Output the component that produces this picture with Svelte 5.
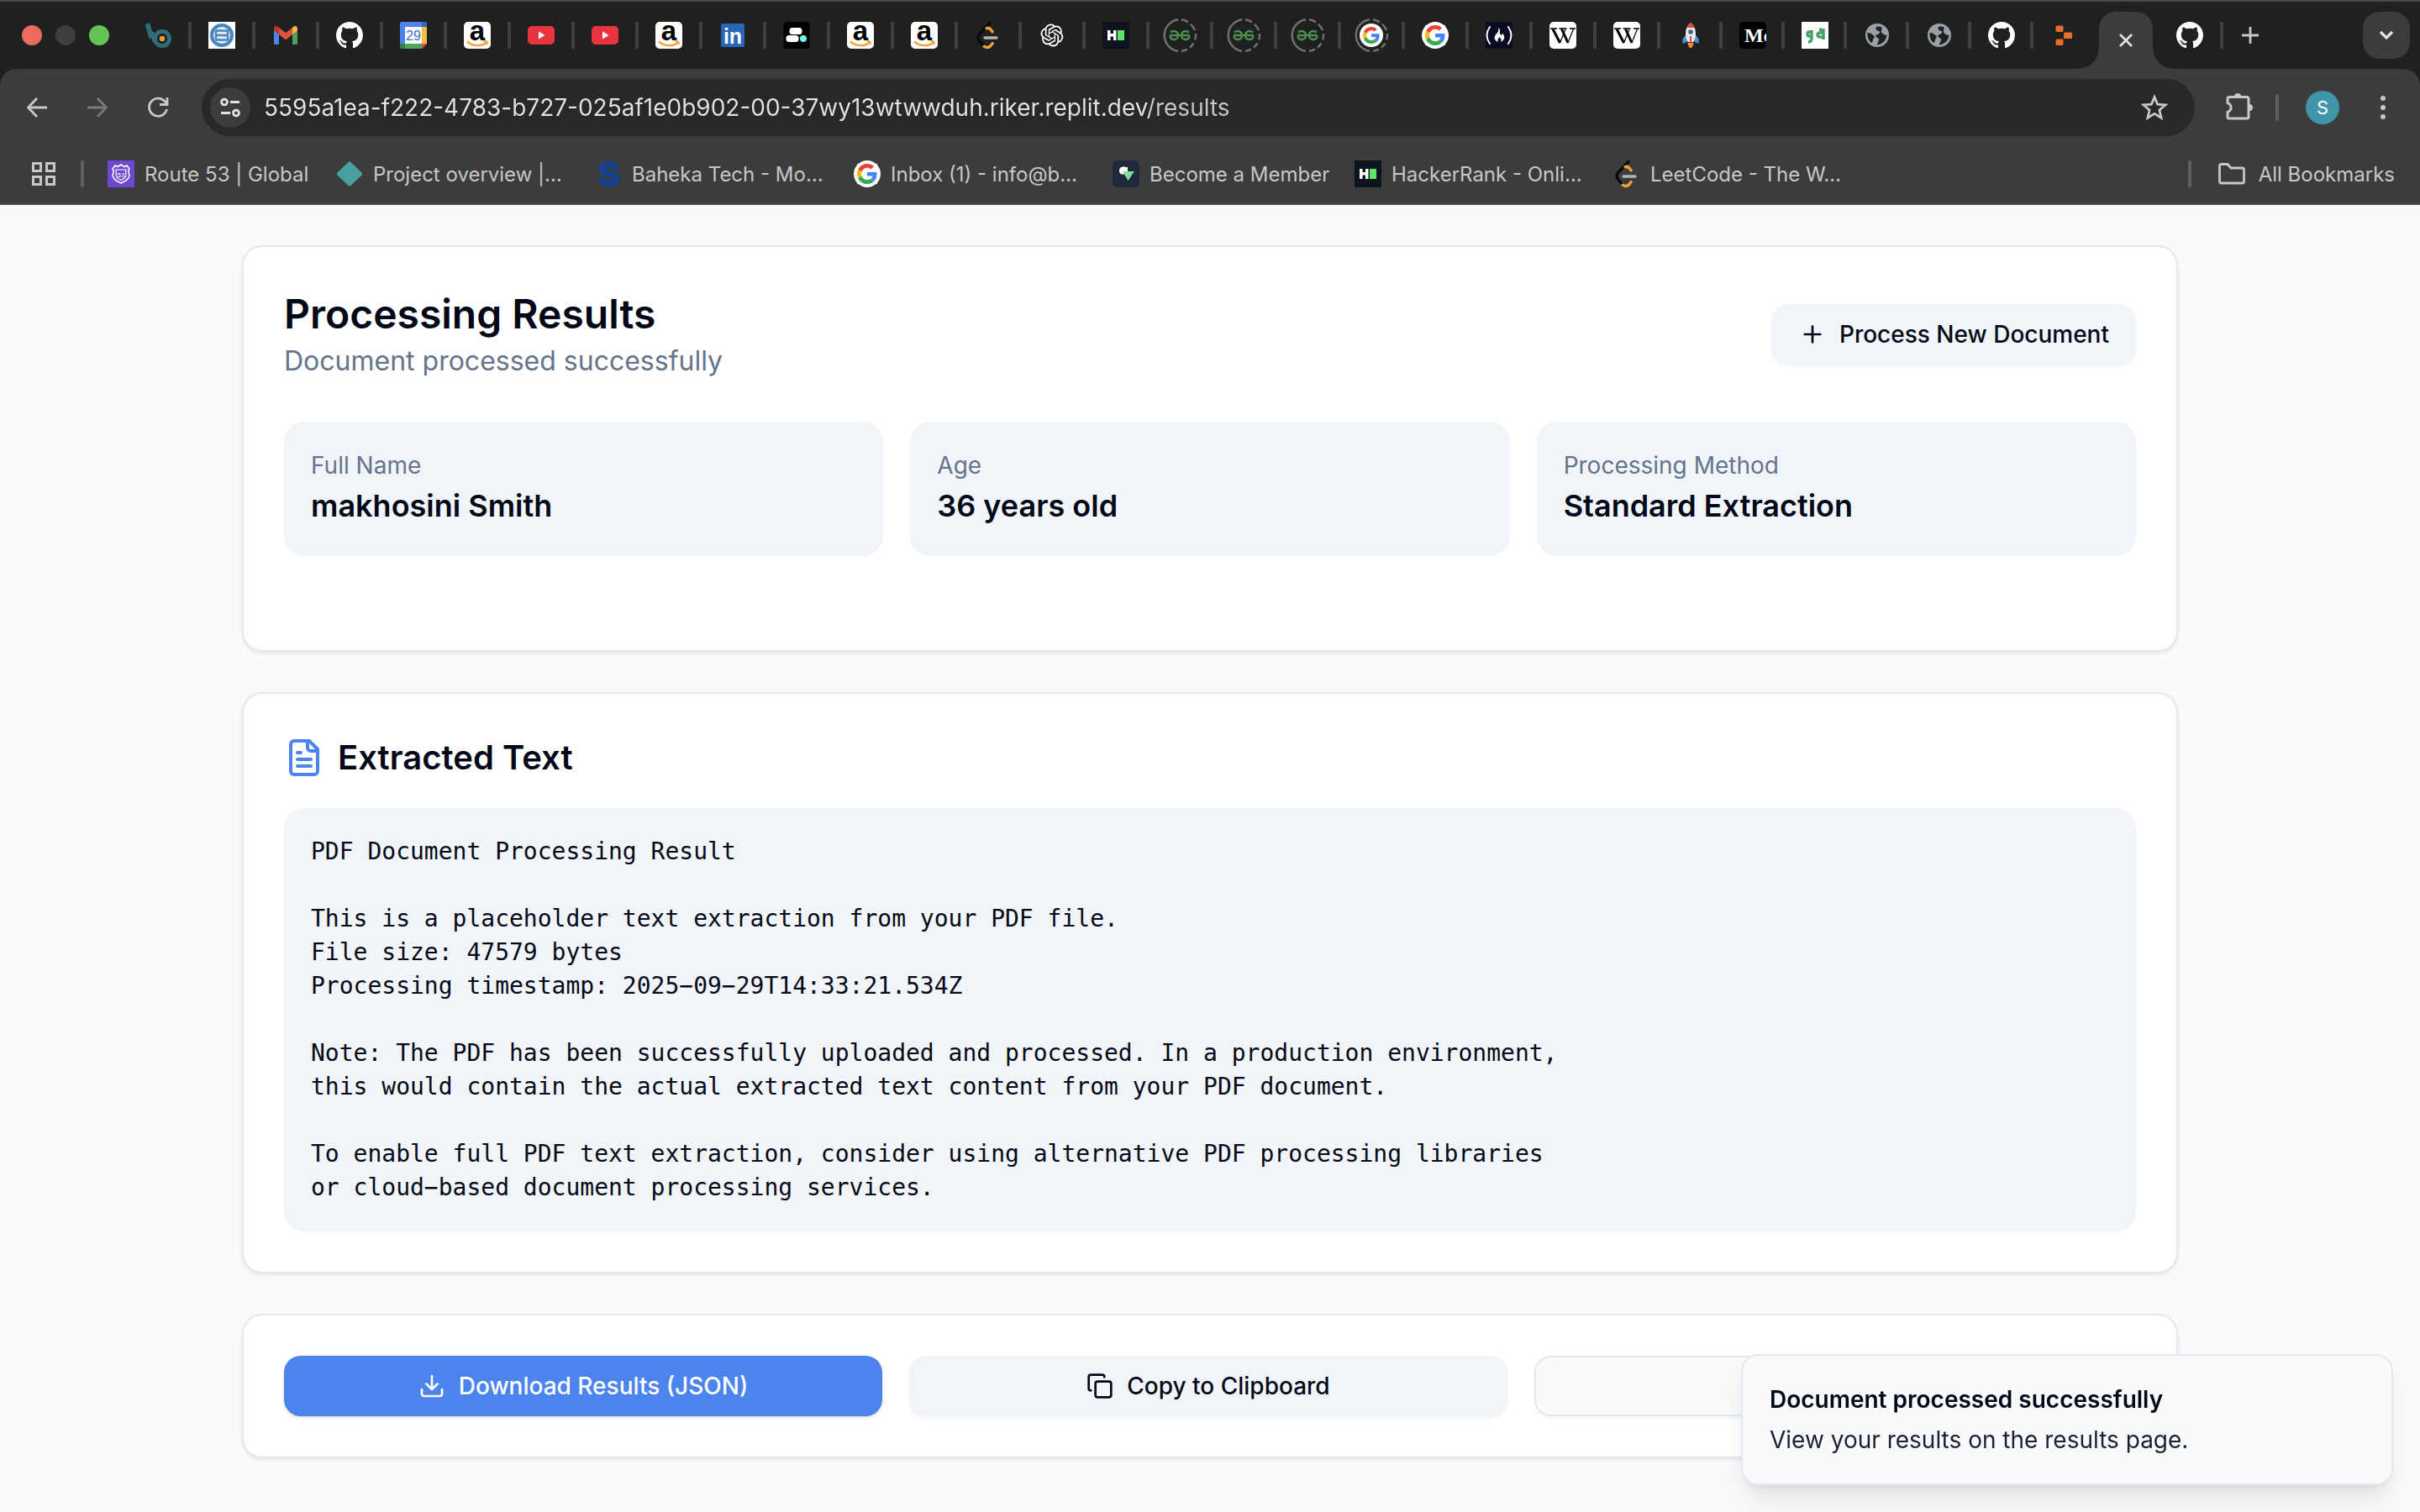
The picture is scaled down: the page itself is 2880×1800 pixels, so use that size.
<script>
  const tabs = [
    'bluehost', 'edge', 'gmail', 'github', 'calendar', 'amazon', 'youtube', 'youtube',
    'amazon', 'linkedin', 'blobs', 'amazon', 'amazon', 'leetcode', 'openai', 'hackerrank',
    'geeks', 'geeks', 'geeks', 'googleRing', 'google', 'freecodecamp', 'wikipedia', 'wikipedia',
    'rocket', 'medium', 'quote', 'globe', 'globe', 'github', 'replit'
  ];

  const bookmarks = [
    { icon: 'route53', label: 'Route 53 | Global', size: 'w-route' },
    { icon: 'diamond', label: 'Project overview |…', size: '' },
    { icon: 'letterS', label: 'Baheka Tech - Mo…', size: '' },
    { icon: 'google', label: 'Inbox (1) - info@b…', size: '' },
    { icon: 'member', label: 'Become a Member', size: 'w-member' },
    { icon: 'hackerrank', label: 'HackerRank - Onli…', size: '' },
    { icon: 'leetcode', label: 'LeetCode - The W…', size: '' }
  ];

  const stats = [
    { label: 'Full Name', value: 'makhosini Smith' },
    { label: 'Age', value: '36 years old' },
    { label: 'Processing Method', value: 'Standard Extraction' }
  ];

  const extracted = `PDF Document Processing Result

This is a placeholder text extraction from your PDF file.
File size: 47579 bytes
Processing timestamp: 2025−09−29T14:33:21.534Z

Note: The PDF has been successfully uploaded and processed. In a production environment,
this would contain the actual extracted text content from your PDF document.

To enable full PDF text extraction, consider using alternative PDF processing libraries
or cloud−based document processing services.`;

  let url = $state('5595a1ea-f222-4783-b727-025af1e0b902-00-37wy13wtwwduh.riker.replit.dev/results');
</script>

{#snippet googleMark()}
  <circle cx="24" cy="24" r="34" fill="#fff" />
  <path fill="#EA4335" d="M24 9.5c3.54 0 6.71 1.22 9.21 3.6l6.85-6.85C35.9 2.38 30.47 0 24 0 14.62 0 6.51 5.38 2.56 13.22l7.98 6.19C12.43 13.72 17.74 9.5 24 9.5z" />
  <path fill="#4285F4" d="M46.98 24.55c0-1.57-.15-3.09-.38-4.55H24v9.02h12.94c-.58 2.96-2.26 5.48-4.78 7.18l7.73 6c4.51-4.18 7.09-10.36 7.09-17.65z" />
  <path fill="#FBBC05" d="M10.53 28.59c-.48-1.45-.76-2.99-.76-4.59s.27-3.14.76-4.59l-7.98-6.19C.92 16.46 0 20.12 0 24c0 3.88.92 7.54 2.56 10.78l7.97-6.19z" />
  <path fill="#34A853" d="M24 48c6.48 0 11.93-2.13 15.89-5.81l-7.73-6c-2.15 1.45-4.92 2.3-8.16 2.3-6.26 0-11.57-4.22-13.47-9.91l-7.98 6.19C6.51 42.62 14.62 48 24 48z" />
{/snippet}

{#snippet ring()}
  <g fill="none" stroke="#707272" stroke-width="2.4">
    <path d="M14 -2.8A19 19 0 0 0 14 34.8" />
    <path d="M18 -2.8A19 19 0 0 1 26 0.4M29 2.8A19 19 0 0 1 34 10M35 14A19 19 0 0 1 34.2 21.5M32.5 25.5A19 19 0 0 1 28 30.5M25 32.6A19 19 0 0 1 18 34.8" />
  </g>
{/snippet}

{#snippet favicon(name)}
  <svg class="favicon" viewBox="0 0 32 32" aria-hidden="true">
    {#if name === 'bluehost'}
      <path d="M0.5 3.5 6 1l4.500 15-4.500 5z" fill="#2f6d7a" />
      <circle cx="21" cy="20" r="8.500" fill="none" stroke="#2f6d7a" stroke-width="5" />
      <path d="M6 8c.5 7 2 14 6 19l4-10z" fill="#2f6d7a" />
      <circle cx="21" cy="20" r="6" fill="#1f2120" />
      <circle cx="21" cy="20" r="3.200" fill="#f29a38" />
    {:else if name === 'edge'}
      <rect width="32" height="32" fill="#fff" />
      <circle cx="16" cy="16" r="12" fill="#e3edf6" stroke="#4a86bd" stroke-width="4" />
      <path d="M9 10.500h14v11H9M9 16h14M9 10.500v11" fill="none" stroke="#4a86bd" stroke-width="2.500" />
    {:else if name === 'gmail'}
      <path d="M2 8v17.500A1.500 1.500 0 0 0 3.500 27H8V14z" fill="#4c87ee" />
      <path d="M30 8v17.500a1.500 1.500 0 0 1-1.500 1.500H24V14z" fill="#4ea35c" />
      <path d="M24 7v8l6-4.500V8a3 3 0 0 0-4.800-2.400z" fill="#f3b93f" />
      <path d="M8 7v8l-6-4.500V8a3 3 0 0 1 4.800-2.400z" fill="#b6382c" />
      <path d="M8 7l8 6 8-6v8l-8 6.500L8 15z" fill="#dc5142" />
    {:else if name === 'github'}
      <path transform="scale(2)" fill="#fff" d="M8 0C3.58 0 0 3.58 0 8c0 3.54 2.29 6.53 5.47 7.59.4.07.55-.17.55-.38 0-.19-.01-.82-.01-1.49-2.01.37-2.53-.49-2.69-.94-.09-.23-.48-.94-.82-1.13-.28-.15-.68-.52-.01-.53.63-.01 1.08.58 1.23.82.72 1.21 1.87.87 2.33.66.07-.52.28-.87.51-1.07-1.78-.2-3.64-.89-3.64-3.95 0-.87.31-1.59.82-2.15-.08-.2-.36-1.02.08-2.12 0 0 .67-.21 2.2.82.64-.18 1.32-.27 2-.27s1.36.09 2 .27c1.53-1.04 2.2-.82 2.2-.82.44 1.1.16 1.92.08 2.12.51.56.82 1.27.82 2.15 0 3.07-1.87 3.75-3.65 3.95.29.25.54.73.54 1.48 0 1.07-.01 1.93-.01 2.2 0 .21.15.46.55.38A8.01 8.01 0 0 0 16 8c0-4.42-3.58-8-8-8z" />
    {:else if name === 'calendar'}
      <path d="M0 2a2 2 0 0 1 2-2h28a2 2 0 0 1 2 2v24l-6 6H2a2 2 0 0 1-2-2z" fill="#4a83ee" />
      <path d="M26 6h6v20h-6z" fill="#f4bc42" />
      <path d="M26 0h4a2 2 0 0 1 2 2v4h-6z" fill="#2f64c4" />
      <path d="M6 26h20v6H6z" fill="#53a45e" />
      <path d="M0 26h6v6H2a2 2 0 0 1-2-2z" fill="#38803f" />
      <path d="M26 26h6l-6 6z" fill="#dc5142" />
      <rect x="6" y="6" width="20" height="20" fill="#fff" />
      <text x="16" y="21.500" text-anchor="middle" class="sans" font-size="16" fill="#3a6fd0">29</text>
    {:else if name === 'amazon'}
      <rect width="32" height="32" rx="5" fill="#fff" />
      <text x="16" y="22" text-anchor="middle" class="sans bold" font-size="33" fill="#000">a</text>
      <path d="M4 23.500c7 6 17 6 23 1" fill="none" stroke="#f2a43a" stroke-width="2.400" />
      <path d="M23.500 23.300c3-.8 5.500-.6 4 4" fill="none" stroke="#f2a43a" stroke-width="1.800" />
    {:else if name === 'youtube'}
      <rect y="5" width="32" height="22" rx="5" fill="#ea3340" />
      <path d="M13 11.500v9l7.500-4.500z" fill="#fff" />
    {:else if name === 'linkedin'}
      <rect x="2" y="2" width="28" height="28" rx="2" fill="#2867b8" />
      <text x="16" y="26" text-anchor="middle" class="sans bold" font-size="25" fill="#fff">in</text>
    {:else if name === 'blobs'}
      <rect x="0.5" width="31" height="32" rx="4" fill="#000" />
      <rect x="7.500" y="7" width="15" height="8" rx="3.500" fill="#fff" />
      <rect x="3.500" y="16" width="15" height="8" rx="3.500" fill="#fff" />
      <circle cx="24" cy="20" r="4" fill="#6ff5f0" />
    {:else if name === 'leetcode'}
      <path d="M18 1.500 6 14q-4 4.500 0 9l5 6" fill="none" stroke="#0a0a0a" stroke-width="3.400" stroke-linecap="round" />
      <path d="M13 8.500q3-2.500 6 .5l3 4M10 28.500q5 4 9 0l3-4" fill="none" stroke="#eda23b" stroke-width="3.400" />
      <path d="M12 19h14" stroke="#b4b3b3" stroke-width="3.400" stroke-linecap="round" />
    {:else if name === 'openai'}
      <path transform="translate(2.500 2.500) scale(1.120)" fill="#fff" d="M22.2819 9.8211a5.9847 5.9847 0 0 0-.5157-4.9108 6.0462 6.0462 0 0 0-6.5098-2.9A6.0651 6.0651 0 0 0 4.9807 4.1818a5.9847 5.9847 0 0 0-3.9977 2.9 6.0462 6.0462 0 0 0 .7427 7.0966 5.98 5.98 0 0 0 .511 4.9107 6.051 6.051 0 0 0 6.5146 2.9001A5.9847 5.9847 0 0 0 13.2599 24a6.0557 6.0557 0 0 0 5.7718-4.2058 5.9894 5.9894 0 0 0 3.9977-2.9001 6.0557 6.0557 0 0 0-.7475-7.0729zm-9.022 12.6081a4.4755 4.4755 0 0 1-2.8764-1.0408l.1419-.0804 4.7783-2.7582a.7948.7948 0 0 0 .3927-.6813v-6.7369l2.02 1.1686a.071.071 0 0 1 .038.052v5.5826a4.504 4.504 0 0 1-4.4945 4.4944zm-9.6607-4.1254a4.4708 4.4708 0 0 1-.5346-3.0137l.142.0852 4.783 2.7582a.7712.7712 0 0 0 .7806 0l5.8428-3.3685v2.3324a.0804.0804 0 0 1-.0332.0615L9.74 19.9502a4.4992 4.4992 0 0 1-6.1408-1.6464zM2.3408 7.8956a4.485 4.485 0 0 1 2.3655-1.9728V11.6a.7664.7664 0 0 0 .3879.6765l5.8144 3.3543-2.0201 1.1685a.0757.0757 0 0 1-.071 0l-4.8303-2.7865A4.504 4.504 0 0 1 2.3408 7.872zm16.5963 3.8558L13.1038 8.364 15.1192 7.2a.0757.0757 0 0 1 .071 0l4.8303 2.7913a4.4944 4.4944 0 0 1-.6765 8.1042v-5.6772a.79.79 0 0 0-.407-.667zm2.0107-3.0231l-.142-.0852-4.7735-2.7818a.7759.7759 0 0 0-.7854 0L9.409 9.2297V6.8974a.0662.0662 0 0 1 .0284-.0615l4.8303-2.7866a4.4992 4.4992 0 0 1 6.6802 4.66zM8.3065 12.863l-2.02-1.1638a.0804.0804 0 0 1-.038-.0567V6.0742a4.4992 4.4992 0 0 1 7.3757-3.4537l-.142.0805L8.704 5.459a.7948.7948 0 0 0-.3927.6813zm1.0976-2.3654l2.602-1.4998 2.6069 1.4998v2.9994l-2.5974 1.4997-2.6067-1.4997Z" />
    {:else if name === 'hackerrank'}
      <rect width="32" height="32" fill="#0e141e" />
      <path d="M6 10h3.500v4H13v-4h3.500v12H13v-4.500H9.500V22H6z" fill="#fff" />
      <rect x="18" y="10" width="8" height="12" fill="#5fe465" />
    {:else if name === 'geeks'}
      {@render ring()}
      <g fill="none" stroke="#4a8f4d" stroke-width="2.400">
        <path d="M5 12.500c4-3 9-1 9 3.500 0 6-8.500 7-9.500 1M4 16h24" />
        <path d="M27 12.500c-4-3-9-1-9 3.500 0 6 8.500 7 9.500 1" />
      </g>
    {:else if name === 'googleRing'}
      {@render ring()}
      <circle cx="16" cy="16" r="14" fill="#fff" />
      <svg x="6" y="6" width="20" height="20" viewBox="0 0 48 48">{@render googleMark()}</svg>
    {:else if name === 'google'}
      <circle cx="16" cy="16" r="16" fill="#fff" />
      <svg x="4" y="4" width="24" height="24" viewBox="0 0 48 48">{@render googleMark()}</svg>
    {:else if name === 'freecodecamp'}
      <rect width="32" height="32" fill="#0a0a23" />
      <path d="M5 6q-7 10 0 20M27 6q7 10 0 20" fill="none" stroke="#fff" stroke-width="2" stroke-linecap="round" />
      <path d="M15 7c5 4-1 6 4 9 1-1 1-2 .5-3 5 5 2.500 9-1.500 11 1.500-3 0-4-1.500-6-1 2-3 3-1.500 6-6-2-5-7-2-10 2-2 3-4 2-7z" fill="#fff" />
    {:else if name === 'wikipedia'}
      <rect width="32" height="32" rx="5" fill="#fff" />
      <g fill="none" stroke="#000">
        <path d="M4 8.500 12.500 25M14.500 8.500 22 25" stroke-width="3" />
        <path d="M12.500 25 19 9M22 25 28.500 8.500" stroke-width="1.200" />
        <path d="M1 8h8M11.500 8h9M24 8h7" stroke-width="1.400" />
      </g>
    {:else if name === 'rocket'}
      <path d="M10 16 6.500 20v6l5-2zM22 16l3.500 4v6l-5-2z" fill="#4a8fdb" />
      <path d="M16 1c5 4 6 9 6 14 0 4-1 7-2.500 9h-7C11 22 10 19 10 15c0-5 1-10 6-14z" fill="#e4eaf0" />
      <path d="M16 1c2.200 1.700 3.600 3.700 4.500 6h-9c.9-2.300 2.300-4.300 4.500-6z" fill="#d8473a" />
      <circle cx="16" cy="12" r="2.800" fill="#4c6377" />
      <path d="M15 17h2v8h-2z" fill="#d8473a" />
      <path d="M12.500 25h7q0 4-3.500 6.500Q12.500 29 12.500 25z" fill="#ee8e3c" />
    {:else if name === 'medium'}
      <rect width="32" height="32" rx="5" fill="#000" />
      <svg width="32" height="32"><text x="6" y="24" class="serif bold" font-size="24" fill="#fff">Mc</text></svg>
    {:else if name === 'quote'}
      <rect width="32" height="32" fill="#fff" />
      <path d="M12 10v9q0 5-4 5M12 17H9q-2 0-2-2.500T9 12h3M26 8v13M26 18h-4q-3 0-3-2.500t3-2.500h3q0-4-4-4" fill="none" stroke="#45a167" stroke-width="3.400" />
    {:else if name === 'globe'}
      <circle cx="16" cy="16" r="14" fill="#9ba0a8" />
      <path d="M17 5.500c-4 0-3 5 1 5.500 3 .5 0 4-3 4.500-2 .5 0 3 2 4 3 1-1 5-1 8 7-1 11-6 11.500-12-3 1-4-1-6-2.500-2-2 2-6-1-7zM4.500 13c3 0 5 1 7.500 3.500 2 2-1 3-1 5 0 1.500-1 3-2 3.500-3-2.500-5-7-4.500-12z" fill="#1f2120" />
    {:else if name === 'replit'}
      <g fill="#e66c2c">
        <rect x="6.500" y="4.500" width="9" height="7.500" rx="1.500" />
        <rect x="16" y="12.500" width="10" height="7.500" rx="1.500" />
        <rect x="6.500" y="20.500" width="9" height="7.500" rx="1.500" />
      </g>
    {:else if name === 'route53'}
      <path d="M0 0h32v32H0z" fill="#6f47d1" />
      <path d="M9 6l3 1.500L16 5l4 2.500L23 6l3 4q-2.500 3 0 7 0 6-10 10Q6 23 6 17q2.500-4 0-7z" fill="none" stroke="#fff" stroke-width="1.600" />
      <path d="M10 11h12q-1 3 0 6 0 4-6 6.500-6-2.500-6-6.500 1-3 0-6z" fill="none" stroke="#fff" stroke-width="1.200" />
      <text x="16" y="19.500" text-anchor="middle" class="sans" font-size="8" fill="#fff">53</text>
    {:else if name === 'diamond'}
      <path d="M14.500 2q1.500-1.500 3 0l13 12.500q1.500 1.500 0 3L17.500 30q-1.500 1.500-3 0l-13-12.500q-1.500-1.500 0-3z" fill="#4aa09f" />
    {:else if name === 'letterS'}
      <text x="17" y="31" text-anchor="middle" class="sans black" font-size="41" fill="#16418f">S</text>
    {:else if name === 'member'}
      <rect width="32" height="32" rx="5" fill="#1e293a" />
      <path d="M8 13a5 5 0 0 1 9-3.500v7H12A4 4 0 0 1 8 13z" fill="#fff" />
      <path d="M12 13h14l-7.500 11z" fill="#7fdf9c" />
      <path d="M12 8h6v5h-6z" fill="#fff" />
    {/if}
  </svg>
{/snippet}

<div class="browser">
  <nav class="tab-strip" aria-label="Browser tabs">
    <div class="lights"><i class="red"></i><i class="grey"></i><i class="green"></i></div>
    {#each tabs as tab, i}
      <button class="tab" class:narrow={i >= 24} class:last={i === tabs.length - 1} aria-label={tab}>
        {@render favicon(tab)}
      </button>
    {/each}
    <button class="active-tab" aria-label="Close tab">
      <svg viewBox="0 0 24 24" width="24" height="24"><path d="M5 5l14 14M19 5L5 19" stroke="#e3e3e3" stroke-width="2.600" /></svg>
    </button>
    <button class="tab after" aria-label="github">{@render favicon('github')}</button>
    <button class="new-tab" aria-label="New tab">
      <svg viewBox="0 0 24 24" width="24" height="24"><path d="M12 2v20M2 12h20" stroke="#c7c7c7" stroke-width="2.800" /></svg>
    </button>
    <button class="tab-search" aria-label="Search tabs">
      <svg viewBox="0 0 24 24" width="24" height="24"><path d="M5 8l7 7 7-7" fill="none" stroke="#e3e3e3" stroke-width="3.200" /></svg>
    </button>
  </nav>

  <div class="toolbar">
    <button class="tool" aria-label="Back">
      <svg viewBox="0 0 32 32" width="32" height="32"><path d="M28 16H6M16 5 5.500 16 16 27" fill="none" stroke="#c7c7c7" stroke-width="2.800" /></svg>
    </button>
    <button class="tool" aria-label="Forward">
      <svg viewBox="0 0 32 32" width="32" height="32"><path d="M4 16h22M16 5l10.500 11L16 27" fill="none" stroke="#7a7a7a" stroke-width="2.800" /></svg>
    </button>
    <button class="tool" aria-label="Reload">
      <svg viewBox="0 0 32 32" width="32" height="32"><path d="M26.500 18A10.600 10.600 0 1 1 24 8.500l3 3M27 4v8.500h-9" fill="none" stroke="#c7c7c7" stroke-width="2.800" /></svg>
    </button>
    <div class="omnibox">
      <button class="site-info" aria-label="Site information">
        <svg viewBox="0 0 32 32" width="32" height="32" fill="none" stroke="#e3e3e3" stroke-width="2.800"><circle cx="9" cy="9.500" r="3.400" /><path d="M16 9.500h11M5 22.500h11" /><circle cx="23" cy="22.500" r="3.400" /></svg>
      </button>
      <input class="url" aria-label="Address" bind:value={url} spellcheck="false" />
      <button class="star" aria-label="Bookmark this page">
        <svg viewBox="0 0 32 32" width="32" height="32"><path d="M16 3.500l3.600 8.600 9.400.8-7.100 6.100 2.200 9.200L16 23.300l-8.100 4.900 2.200-9.200L3 12.900l9.400-.8z" fill="none" stroke="#c7c7c7" stroke-width="2.800" /></svg>
      </button>
    </div>
    <button class="tool ext" aria-label="Extensions">
      <svg viewBox="0 0 36 36" width="36" height="36"><path d="M5 7.500a2 2 0 0 1 2-2h21a2 2 0 0 1 2 2V29a2 2 0 0 1-2 2H7a2 2 0 0 1-2-2v-5.500q4-1.500 4-5.500t-4-5.500z" fill="none" stroke="#c7c7c7" stroke-width="3" /><path d="M13 5a4 4 0 0 1 8 0zM31 14a4 4 0 0 1 0 8z" fill="#c7c7c7" /></svg>
    </button>
    <span class="bar"></span>
    <button class="avatar" aria-label="Profile">S</button>
    <button class="tool dots" aria-label="Menu">
      <svg viewBox="0 0 32 32" width="32" height="32" fill="#c7c7c7"><circle cx="16" cy="5" r="3" /><circle cx="16" cy="16" r="3" /><circle cx="16" cy="27" r="3" /></svg>
    </button>
  </div>

  <nav class="bookmarks" aria-label="Bookmarks">
    <button class="apps" aria-label="Apps">
      <svg viewBox="0 0 28 28" width="28" height="28" fill="none" stroke="#c7c7c7" stroke-width="3"><path d="M1.500 1.500h9v9h-9zM17.500 1.500h9v9h-9zM1.500 17.500h9v9h-9zM17.500 17.500h9v9h-9z" /></svg>
    </button>
    <span class="bar"></span>
    <div class="marks">
      {#each bookmarks as b}
        <a class="mark {b.size}" href="#top">{@render favicon(b.icon)}<span>{b.label}</span></a>
      {/each}
    </div>
    <span class="bar"></span>
    <a class="all" href="#top">
      <svg viewBox="0 0 32 32" width="32" height="32"><path d="M1.500 6.500a2 2 0 0 1 2-2H11l4 4.500h13.500a2 2 0 0 1 2 2V25a2 2 0 0 1-2 2h-25a2 2 0 0 1-2-2z" fill="none" stroke="#c7c7c7" stroke-width="2.800" /></svg>
      <span>All Bookmarks</span>
    </a>
  </nav>
</div>

<main>
  <section class="card summary">
    <header>
      <div>
        <h1>Processing Results</h1>
        <p>Document processed successfully</p>
      </div>
      <button class="btn soft">
        <svg class="lucide" viewBox="0 0 24 24"><path d="M5 12h14M12 5v14" /></svg>
        Process New Document
      </button>
    </header>
    <dl class="stats">
      {#each stats as s}
        <div class="stat"><dt>{s.label}</dt><dd>{s.value}</dd></div>
      {/each}
    </dl>
  </section>

  <section class="card">
    <h2>
      <svg class="lucide big" viewBox="0 0 24 24"><path d="M15 2H6a2 2 0 0 0-2 2v16a2 2 0 0 0 2 2h12a2 2 0 0 0 2-2V7Z" /><path d="M14 2v4a2 2 0 0 0 2 2h4M10 9H8M16 13H8M16 17H8" /></svg>
      Extracted Text
    </h2>
    <pre>{extracted}</pre>
  </section>

  <section class="card actions">
    <button class="btn primary">
      <svg class="lucide" viewBox="0 0 24 24"><path d="M21 15v4a2 2 0 0 1-2 2H5a2 2 0 0 1-2-2v-4M7 10l5 5 5-5M12 15V3" /></svg>
      Download Results (JSON)
    </button>
    <button class="btn soft">
      <svg class="lucide" viewBox="0 0 24 24"><rect x="8" y="8" width="14" height="14" rx="2" /><path d="M4 16c-1.100 0-2-.9-2-2V4c0-1.100.9-2 2-2h10c1.100 0 2 .9 2 2" /></svg>
      Copy to Clipboard
    </button>
    <button class="btn outline" aria-label="More actions"></button>
  </section>
</main>

<div class="toast" role="status">
  <strong>Document processed successfully</strong>
  <span>View your results on the results page.</span>
</div>

<style>
  :global(body) {
    background: #f9fafc;
    color: #020817;
    font-family: Inter, "Liberation Sans", sans-serif;
  }
  :global(*) { box-sizing: border-box; }
  button, input { font: inherit; color: inherit; border: 0; padding: 0; background: none; }
  button { display: flex; align-items: center; justify-content: center; flex: none; }
  svg { display: block; flex: none; }
  h1, h2, p, dl, dd, pre { margin: 0; }

  .browser { background: #1f2120; border-top: 2px solid #484b4a; }
  .tab-strip { display: flex; align-items: center; height: 80px; padding: 0 12px 0 26px; }
  .lights { display: flex; gap: 16px; width: 126px; flex: none; }
  .lights i { width: 24px; height: 24px; border-radius: 50%; }
  .red { background: #ec6a5e; }
  .grey { background: #3d3f3e; }
  .green { background: #61c554; }
  .favicon { width: 32px; height: 32px; overflow: visible; }
  .tab { width: 76px; height: 32px; justify-content: flex-start; padding-left: 20px; border-right: 4px solid #3f4140; }
  .tab.narrow { width: 74px; }
  .tab.last { border-right-color: transparent; }
  .active-tab {
    position: relative; width: 64px; height: 68px; margin: 0 8px 0 4px; align-self: flex-end;
    background: #3c3c3c; border-radius: 20px 20px 0 0;
  }
  .active-tab::before, .active-tab::after {
    content: ""; position: absolute; bottom: 0; width: 24px; height: 24px;
  }
  .active-tab::before { right: 100%; background: radial-gradient(circle at 0 0, transparent 23px, #3c3c3c 24px); }
  .active-tab::after { left: 100%; background: radial-gradient(circle at 100% 0, transparent 23px, #3c3c3c 24px); }
  .new-tab { width: 64px; height: 32px; }
  .tab-search { width: 56px; height: 56px; margin-left: auto; background: #3c3c3c; border-radius: 20px; }

  .toolbar { display: flex; align-items: center; height: 92px; padding: 0 20px 0 20px; background: #3c3c3c; border-radius: 20px 20px 0 0; }
  .tool { width: 48px; height: 48px; margin-right: 24px; }
  .omnibox { display: flex; align-items: center; flex: 1; height: 68px; margin: 0 20px 0 4px; padding: 0 32px 0 10px; background: #282828; border-radius: 34px; }
  .site-info { width: 48px; height: 48px; border-radius: 50%; background: #3c3c3c; }
  .url {
    flex: 1; min-width: 0; margin-left: 16px; height: 48px; font-size: 28px; outline: 0;
    background: linear-gradient(90deg, #e3e3e3 1054px, #c7c7c7 1054px); background-clip: text; color: transparent;
  }
  .star { width: 32px; height: 32px; }
  .ext { margin-right: 12px; }
  .ext, .dots { width: 64px; }
  .bar { flex: none; width: 4px; height: 32px; border-radius: 2px; background: #606060; }
  .avatar { width: 40px; height: 40px; margin: 0 20px 0 32px; border-radius: 50%; background: #4195a8; color: #fff; font-size: 22px; }
  .dots { margin-right: -8px; }

  .bookmarks { display: flex; align-items: center; height: 70px; padding: 0 30px 2px 38px; background: #3c3c3c; border-bottom: 2px solid #4a4a4a; font-size: 24px; color: #c7c7c7; }
  .apps { margin-right: 30px; }
  .marks { display: flex; flex: 1; gap: 34px; margin-left: 28px; min-width: 0; }
  .bookmarks a { display: flex; align-items: center; color: inherit; text-decoration: none; white-space: nowrap; }
  .mark { gap: 12px; width: 274px; }
  .w-route { width: 238px; }
  .w-member { width: 254px; }
  .all { gap: 16px; margin-left: 32px; }

  .sans { font-family: "Liberation Sans", sans-serif; }
  .serif { font-family: "Liberation Serif", serif; }
  .bold { font-weight: 700; }
  .black { font-family: Inter, sans-serif; font-weight: 900; }

  main { display: flex; flex-direction: column; gap: 48px; width: 80%; margin: 0 auto; padding: 48px 0; }
  .card { padding: 48px; background: #fff; border: 2px solid #e2e8f0; border-radius: 24px; box-shadow: 0 2px 4px rgba(0, 0, 0, .08); }
  .summary { padding-bottom: 112px; }
  header { display: flex; align-items: center; justify-content: space-between; margin-bottom: 48px; }
  h1 { font-size: 48px; line-height: 64px; font-weight: 600; }
  header p { font-size: 32px; line-height: 48px; color: #64748b; }
  .btn {
    gap: 16px; height: 72px; padding: 0 32px; border-radius: 20px;
    font-size: 28px; font-weight: 500; box-shadow: 0 2px 4px rgba(0, 0, 0, .05);
  }
  .soft { background: #f1f5f9; }
  .primary { background: #4b84ed; color: #fff; box-shadow: 0 2px 4px rgba(0, 0, 0, .12); }
  .outline { background: #f9fafc; border: 2px solid #e2e8f0; }
  .lucide { width: 32px; height: 32px; fill: none; stroke: currentColor; stroke-width: 2; stroke-linecap: round; stroke-linejoin: round; }
  .big { width: 48px; height: 48px; color: #4b84ed; }
  .stats { display: grid; grid-template-columns: repeat(3, 1fr); gap: 32px; }
  .stat { padding: 32px; background: #f1f5f9; border-radius: 24px; }
  dt { font-size: 28px; line-height: 40px; color: #64748b; }
  dd { font-size: 36px; line-height: 56px; font-weight: 600; }
  h2 { display: flex; align-items: center; gap: 16px; margin-bottom: 32px; font-size: 40px; line-height: 56px; font-weight: 600; }
  pre { padding: 32px; background: #f1f5f9; border-radius: 24px; font-family: "DejaVu Sans Mono", monospace; font-size: 28px; line-height: 40px; white-space: pre-wrap; }
  .actions { display: flex; gap: 32px; }
  .actions .btn { flex: 1 1 0; }
  .toast {
    position: fixed; right: 32px; bottom: 32px; width: 776px; padding: 32px;
    display: flex; flex-direction: column; gap: 8px;
    background: #f9fafc; border: 2px solid #e2e8f0; border-radius: 20px;
    font-size: 28px; line-height: 40px;
    box-shadow: 0 20px 30px -6px rgba(0, 0, 0, .1), 0 8px 12px -8px rgba(0, 0, 0, .1);
  }
  .toast strong { font-weight: 600; }
  .toast span { color: #1b2130; }
</style>
